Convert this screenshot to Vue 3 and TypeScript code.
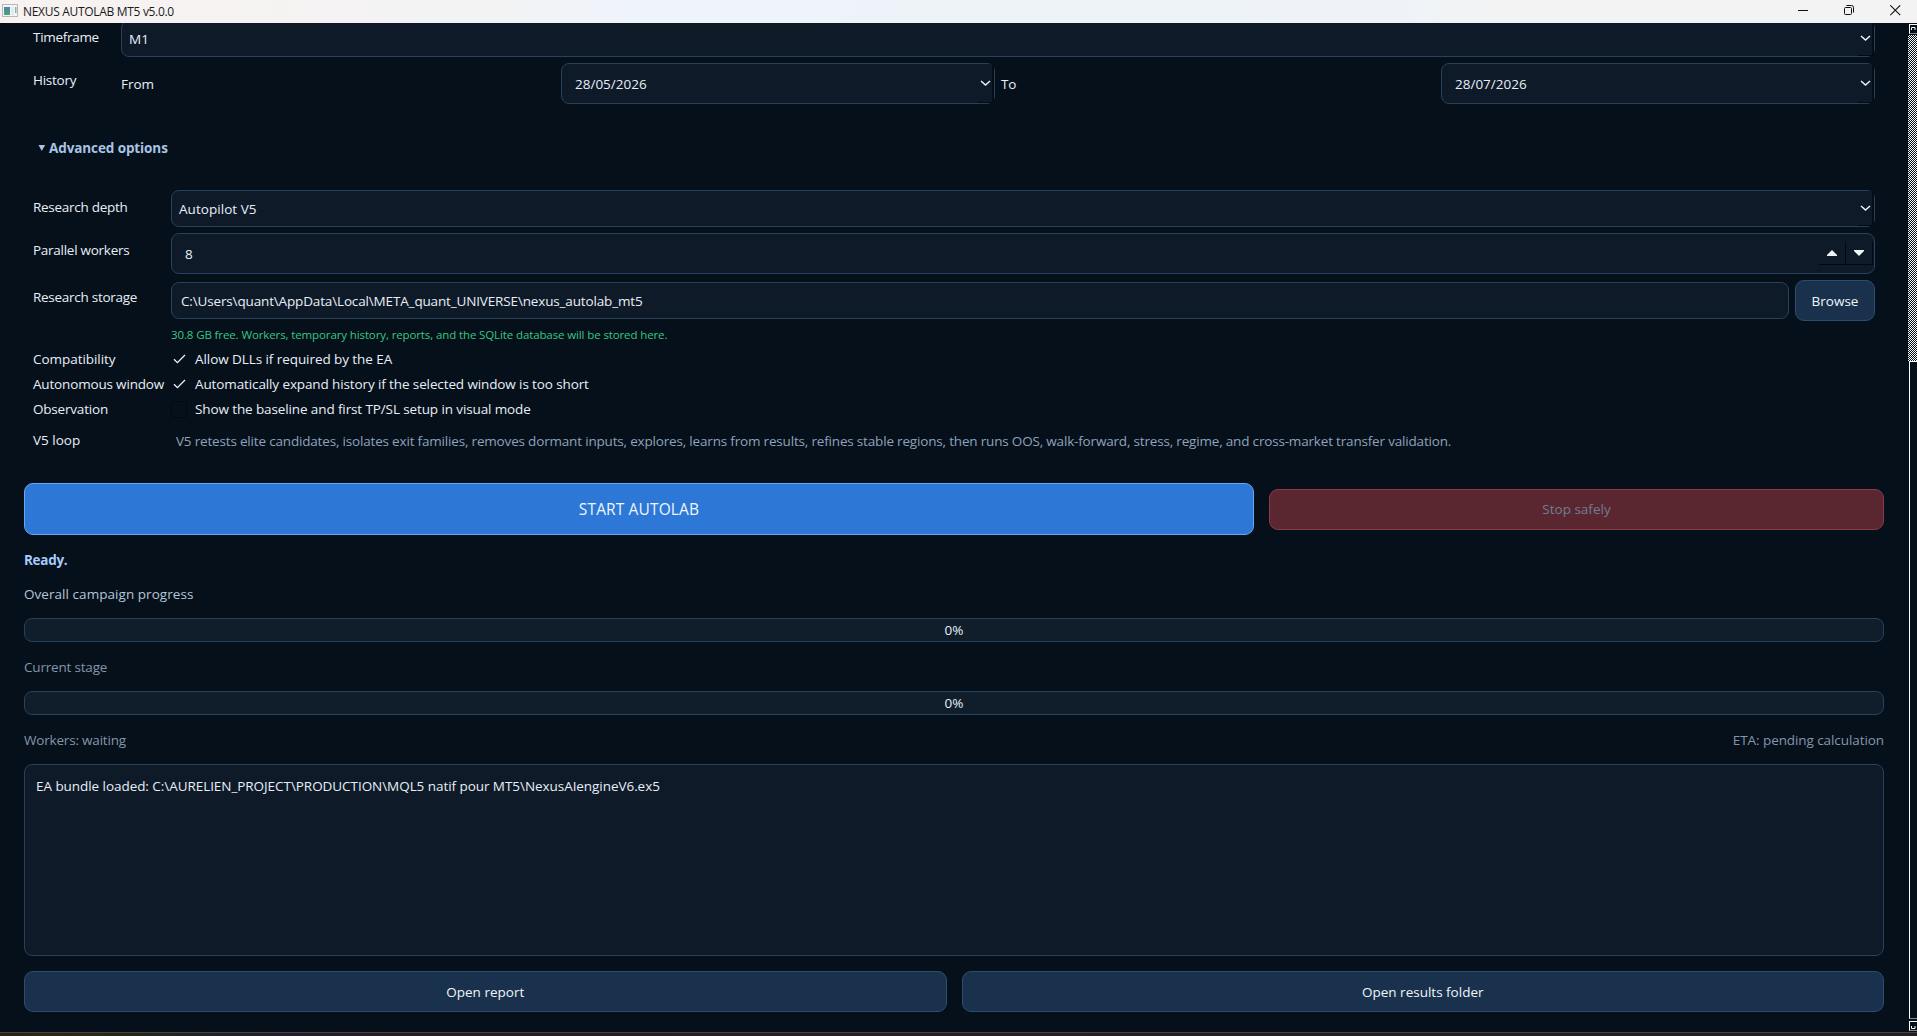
<script setup lang="ts">
import { ref } from 'vue'

interface CheckRow {
  label: string
  text: string
  checked: boolean
  labelClass: string
  textClass: string
}

const timeframe = ref('M1')
const fromDate = ref('28/05/2026')
const toDate = ref('28/07/2026')
const depth = ref('Autopilot V5')
const workers = ref(8)
const storage = ref('C:\\Users\\quant\\AppData\\Local\\META_quant_UNIVERSE\\nexus_autolab_mt5')
const checks = ref<CheckRow[]>([
  { label: 'Compatibility', text: 'Allow DLLs if required by the EA', checked: true, labelClass: 't-comp', textClass: 't-dll' },
  { label: 'Autonomous window', text: 'Automatically expand history if the selected window is too short', checked: true, labelClass: 't-auto', textClass: 't-expand' },
  { label: 'Observation', text: 'Show the baseline and first TP/SL setup in visual mode', checked: false, labelClass: 't-obs', textClass: 't-visual' },
])
const overall = ref(0)
const stage = ref(0)
const log = ref('EA bundle loaded: C:\\AURELIEN_PROJECT\\PRODUCTION\\MQL5 natif pour MT5\\NexusAIengineV6.ex5')
</script>

<template>
  <div class="window">
    <header class="titlebar">
      <svg class="app-icon" width="16" height="14" viewBox="0 0 16 14">
        <defs>
          <linearGradient id="ico" x1="0" y1="0" x2="0" y2="1">
            <stop offset="0" stop-color="#4c84b4" />
            <stop offset="1" stop-color="#4fa36c" />
          </linearGradient>
        </defs>
        <rect x="0.5" y="0.5" width="15" height="12" fill="#f4f6f6" stroke="#b3b8bb" />
        <rect x="2" y="3" width="6" height="8" fill="url(#ico)" />
        <rect x="9" y="3" width="3" height="8" fill="#e3eaee" />
        <rect x="13" y="3" width="1.5" height="6" fill="#7fb7a8" />
      </svg>
      <span class="title">NEXUS AUTOLAB MT5 v5.0.0</span>
      <div class="caption">
        <svg width="11" height="11" viewBox="0 0 11 11"><path d="M0 5.5H10" stroke="#111" /></svg>
        <svg width="11" height="11" viewBox="0 0 11 11" fill="none" stroke="#111">
          <rect x="0.5" y="2.5" width="7" height="7" rx="1" />
          <path d="M2.5 0.5H7.6Q9.5 0.5 9.5 2.4V7.5" />
        </svg>
        <svg width="11" height="11" viewBox="0 0 11 11"><path d="M0.3 0.3L10.2 10.2M10.2 0.3L0.3 10.2" stroke="#111" stroke-width="1.1" /></svg>
      </div>
    </header>

    <div class="body">
      <main class="content">
        <section class="form basic">
          <span class="lab lab-time"><span class="t-time">Timeframe</span></span>
          <div class="field combo combo-top">
            <span>{{ timeframe }}</span>
            <i class="drop"><svg width="11" height="7" viewBox="0 0 11 7"><path d="M1 1L5.5 5L10 1" /></svg></i>
          </div>
          <span class="lab lab-hist"><span class="t-hist">History</span></span>
          <div class="dates">
            <span>From</span>
            <div class="field combo date">
              <span>{{ fromDate }}</span>
              <i class="drop"><svg width="11" height="7" viewBox="0 0 11 7"><path d="M1 1L5.5 5L10 1" /></svg></i>
            </div>
            <span class="t-to">To</span>
            <div class="field combo date">
              <span>{{ toDate }}</span>
              <i class="drop"><svg width="11" height="7" viewBox="0 0 11 7"><path d="M1 1L5.5 5L10 1" /></svg></i>
            </div>
          </div>
        </section>

        <div class="advanced">
          <svg width="8" height="6" viewBox="0 0 8 6"><path d="M0.5 0H7.1L3.8 6Z" fill="#a9c4e4" /></svg>
          <b class="t-adv">Advanced options</b>
        </div>

        <section class="form options">
          <span class="lab l-depth"><span class="t-depth">Research depth</span></span>
          <div class="field combo">
            <span class="t-pilot">{{ depth }}</span>
            <i class="drop"><svg width="11" height="7" viewBox="0 0 11 7"><path d="M1 1L5.5 5L10 1" /></svg></i>
          </div>

          <span class="lab l-work"><span class="t-work">Parallel workers</span></span>
          <div class="field spin">
            <span>{{ workers }}</span>
            <div class="steps">
              <i><svg width="10" height="6" viewBox="0 0 10 6"><path d="M5 0L10 5V6H0V5Z" /></svg></i>
              <i><svg width="10" height="6" viewBox="0 0 10 6"><path d="M0 0H10V1L5 6L0 1Z" /></svg></i>
            </div>
          </div>

          <span class="lab l-stor"><span class="t-stor">Research storage</span></span>
          <div class="storage">
            <div class="field path"><span class="t-path">{{ storage }}</span></div>
            <button class="btn browse">Browse</button>
          </div>

          <span></span>
          <p class="hint">30.8 GB free. Workers, temporary history, reports, and the SQLite database will be stored here.</p>

          <template v-for="c in checks" :key="c.label">
            <span class="lab mid"><span :class="c.labelClass">{{ c.label }}</span></span>
            <div class="check">
              <i class="box" :class="{ off: !c.checked }">
                <svg v-if="c.checked" width="13" height="10" viewBox="0 0 13 10"><path d="M1 5.2L4.4 8.6L12 1" /></svg>
              </i>
              <span :class="c.textClass">{{ c.text }}</span>
            </div>
          </template>

          <span class="lab l-loop">V5 loop</span>
          <p class="loop">V5 retests elite candidates, isolates exit families, removes dormant inputs, explores, learns from results, refines stable regions, then runs OOS, walk-forward, stress, regime, and cross-market transfer validation.</p>
        </section>

        <div class="run">
          <button class="btn start">START AUTOLAB</button>
          <button class="btn stop">Stop safely</button>
        </div>

        <div class="line ready"><b>Ready.</b></div>
        <div class="line overall"><span>Overall campaign progress</span></div>
        <div class="bar"><span>{{ overall }}%</span></div>
        <div class="line dim"><span>Current stage</span></div>
        <div class="bar"><span>{{ stage }}%</span></div>
        <div class="line dim"><span>Workers: waiting</span><span class="t-eta">ETA: pending calculation</span></div>
        <div class="log">{{ log }}</div>
        <div class="links">
          <button class="btn">Open report</button>
          <button class="btn">Open results folder</button>
        </div>
      </main>

      <aside class="scroll">
        <div class="arrow"><svg width="5" height="3" viewBox="0 0 5 3"><path d="M0.5 3V0.5H4V3" /></svg></div>
        <div class="track"></div>
        <div class="thumb"></div>
        <div class="arrow end"><svg width="5" height="3" viewBox="0 0 5 3"><path d="M0.5 0V2.5H4V0" /></svg></div>
      </aside>
    </div>
    <footer class="edge"></footer>
  </div>
</template>

<style>
html,
body {
  margin: 0;
  background: #06101a;
  overflow: hidden;
}
</style>

<style scoped>
* {
  box-sizing: border-box;
}
.window {
  width: 1917px;
  height: 1036px;
  display: flex;
  flex-direction: column;
  background: #06101a;
  color: #e8eef7;
  font: 13.5px/18px "Open Sans", "Noto Sans", sans-serif;
  white-space: nowrap;
  overflow: hidden;
}
svg {
  display: block;
  flex: none;
}
.titlebar {
  height: 23px;
  flex: none;
  display: flex;
  align-items: center;
  padding-left: 2px;
  background: linear-gradient(90deg, #f8f2f0 0, #f3f3f4 500px, #eff3fc 640px, #eff3fb 800px, #edf3f7 950px, #eff3f8 1400px, #f3f3f3 1500px);
  color: #1a1a1a;
  font-size: 12px;
}
.app-icon {
  margin-top: -1px;
}
.title {
  margin-left: 5px;
  letter-spacing: -0.31px;
}
.caption {
  margin-left: auto;
  display: flex;
  gap: 35px;
  padding-right: 16px;
  margin-top: -3px;
}
.body {
  flex: 1;
  min-height: 0;
  display: flex;
  overflow: hidden;
}
.content {
  width: 1908px;
  flex: none;
  padding: 0 24px;
  display: flex;
  flex-direction: column;
}
.form {
  display: grid;
  padding: 0 9px;
}
.basic {
  grid-template-columns: 88px 1fr;
  grid-template-rows: 34px 41px;
  row-gap: 6px;
}
.lab-time {
  padding-top: 5px;
}
.lab-hist {
  padding-top: 8px;
}
.t-time {
  letter-spacing: -0.3px;
}
.t-hist,
.t-depth,
.t-work,
.t-stor {
  letter-spacing: -0.27px;
}
.t-comp {
  letter-spacing: -0.05px;
}
.t-auto {
  letter-spacing: -0.17px;
}
.t-obs {
  letter-spacing: -0.2px;
}
.t-to,
.t-adv {
  letter-spacing: -0.1px;
}
.t-pilot {
  letter-spacing: 0.05px;
}
.t-path {
  letter-spacing: -0.15px;
}
.t-dll {
  letter-spacing: -0.07px;
}
.t-expand,
.t-visual {
  letter-spacing: -0.115px;
}
.t-eta {
  letter-spacing: 0.1px;
}
.field {
  height: 37px;
  border: 1px solid #27415c;
  border-radius: 8px;
  background: #0e1a28;
  display: flex;
  align-items: center;
}
.combo {
  padding-left: 7px;
  justify-content: space-between;
}
.combo-top {
  height: 37px;
  margin-top: -3px;
}
.drop {
  width: 16px;
  height: 100%;
  flex: none;
  display: flex;
  align-items: center;
  justify-content: center;
  background: #0e1a28;
  border-right: 2px solid #060d15;
  border-bottom: 1px solid #050a11;
}
.drop svg,
.box svg {
  fill: none;
  stroke: #f0f4fa;
  stroke-width: 1.5;
}
.dates {
  display: grid;
  grid-template-columns: repeat(4, 1fr);
  gap: 6px;
  align-items: center;
}
.date {
  height: 41px;
  padding-left: 13px;
}
.advanced {
  height: 18px;
  margin-top: 35px;
  padding-left: 14px;
  display: flex;
  align-items: center;
  gap: 3px;
  color: #a9c4e4;
}
.options {
  margin-top: 33px;
  grid-template-columns: 138px 1fr;
  grid-template-rows: 43px 47px 41px 26px 25px 25px 25px 40px;
}
.l-depth,
.l-work,
.l-stor {
  padding-top: 8px;
}
.spin {
  height: 41px;
  padding-left: 13px;
  justify-content: space-between;
}
.steps {
  display: flex;
  margin-right: 1px;
}
.steps i {
  width: 27px;
  height: 23px;
  display: flex;
  align-items: center;
  justify-content: center;
  border-right: 1px solid #04080e;
  border-bottom: 1px solid #04080e;
  fill: #f0f4fa;
}
.storage {
  display: flex;
  gap: 6px;
  align-items: center;
}
.path {
  flex: 1;
  padding-left: 9px;
}
.btn {
  height: 41px;
  margin: 0;
  padding: 0;
  border: 1px solid #2b4d6f;
  border-radius: 9px;
  background: #19314c;
  color: #f0f5fb;
  font: 500 13.5px/18px "Open Sans", "Noto Sans", sans-serif;
}
.browse {
  width: 80px;
}
p {
  margin: 0;
}
.hint {
  color: #35c782;
  font-size: 11.5px;
  letter-spacing: -0.115px;
  padding-top: 5px;
}
.mid {
  padding-top: 3px;
}
.check {
  display: flex;
  align-items: center;
  height: 24px;
}
.box {
  width: 16px;
  height: 17px;
  margin-right: 8px;
  display: flex;
  align-items: center;
  justify-content: center;
}
.box svg {
  stroke-width: 1.3;
}
.off {
  border: 1px solid #040910;
  border-radius: 3px;
}
.l-loop {
  padding-top: 9px;
}
.loop {
  padding: 10px 0 0 5px;
  color: #8ea2bc;
  letter-spacing: -0.18px;
}
.run {
  display: grid;
  grid-template-columns: 2fr 1fr;
  gap: 15px;
  align-items: center;
  margin-top: 21px;
}
.start {
  height: 52px;
  background: #2d78d6;
  border-color: #6aa6f2;
  font-size: 15.5px;
  letter-spacing: 0.13px;
}
.stop {
  background: #5a2730;
  border-color: #8c3a49;
  color: #6f7d93;
}
.line {
  display: flex;
  justify-content: space-between;
  height: 18px;
}
.ready {
  margin: 16px 0 0;
  color: #a5ccfb;
  letter-spacing: -0.3px;
}
.overall {
  margin: 16px 0 15px;
  color: #b5c5d8;
  letter-spacing: 0.05px;
}
.dim {
  margin: 16px 0 15px;
  color: #8495ab;
  letter-spacing: -0.19px;
}
.dim .t-eta {
  letter-spacing: -0.08px;
}
.bar {
  height: 24px;
  flex: none;
  border: 1px solid #27415c;
  border-radius: 8px;
  background: #101d2b;
  display: flex;
  align-items: center;
  justify-content: center;
}
.log {
  height: 192px;
  flex: none;
  border: 1px solid #27415c;
  border-radius: 8px;
  background: #0e1a28;
  padding: 12px 11px;
  letter-spacing: -0.055px;
}
.links {
  margin-top: 15px;
  display: grid;
  grid-template-columns: 1fr 1fr;
  gap: 15px;
}
.scroll {
  flex: 1;
  display: flex;
  flex-direction: column;
  padding-top: 1px;
  overflow: hidden;
}
.arrow {
  width: 12px;
  height: 10px;
  flex: none;
  margin-left: 1px;
  border: 1px solid #fff;
  border-bottom-color: #8a8a84;
  padding: 2px 0 0 1px;
}
.arrow path {
  fill: none;
  stroke: #fff;
}
.track {
  height: 326px;
  margin-top: 1px;
  flex: none;
  background: repeating-conic-gradient(#fff 0 25%, #06101a 0 50%) 0 0 / 2px 2px;
}
.thumb {
  flex: 1;
  margin-left: 1px;
  border: 1px solid #fff;
  border-right: 0;
  border-bottom-color: #8a8a84;
}
.end {
  margin: 2px 0 1px 1px;
  padding-top: 4px;
}
.edge {
  height: 4px;
  flex: none;
  border-top: 1px solid #444446;
  background: linear-gradient(90deg, #2a2419 0, #2b2712 80px, #1e2322 200px, #231d28 290px, #281e20 400px, #241f20 1917px);
}
</style>
